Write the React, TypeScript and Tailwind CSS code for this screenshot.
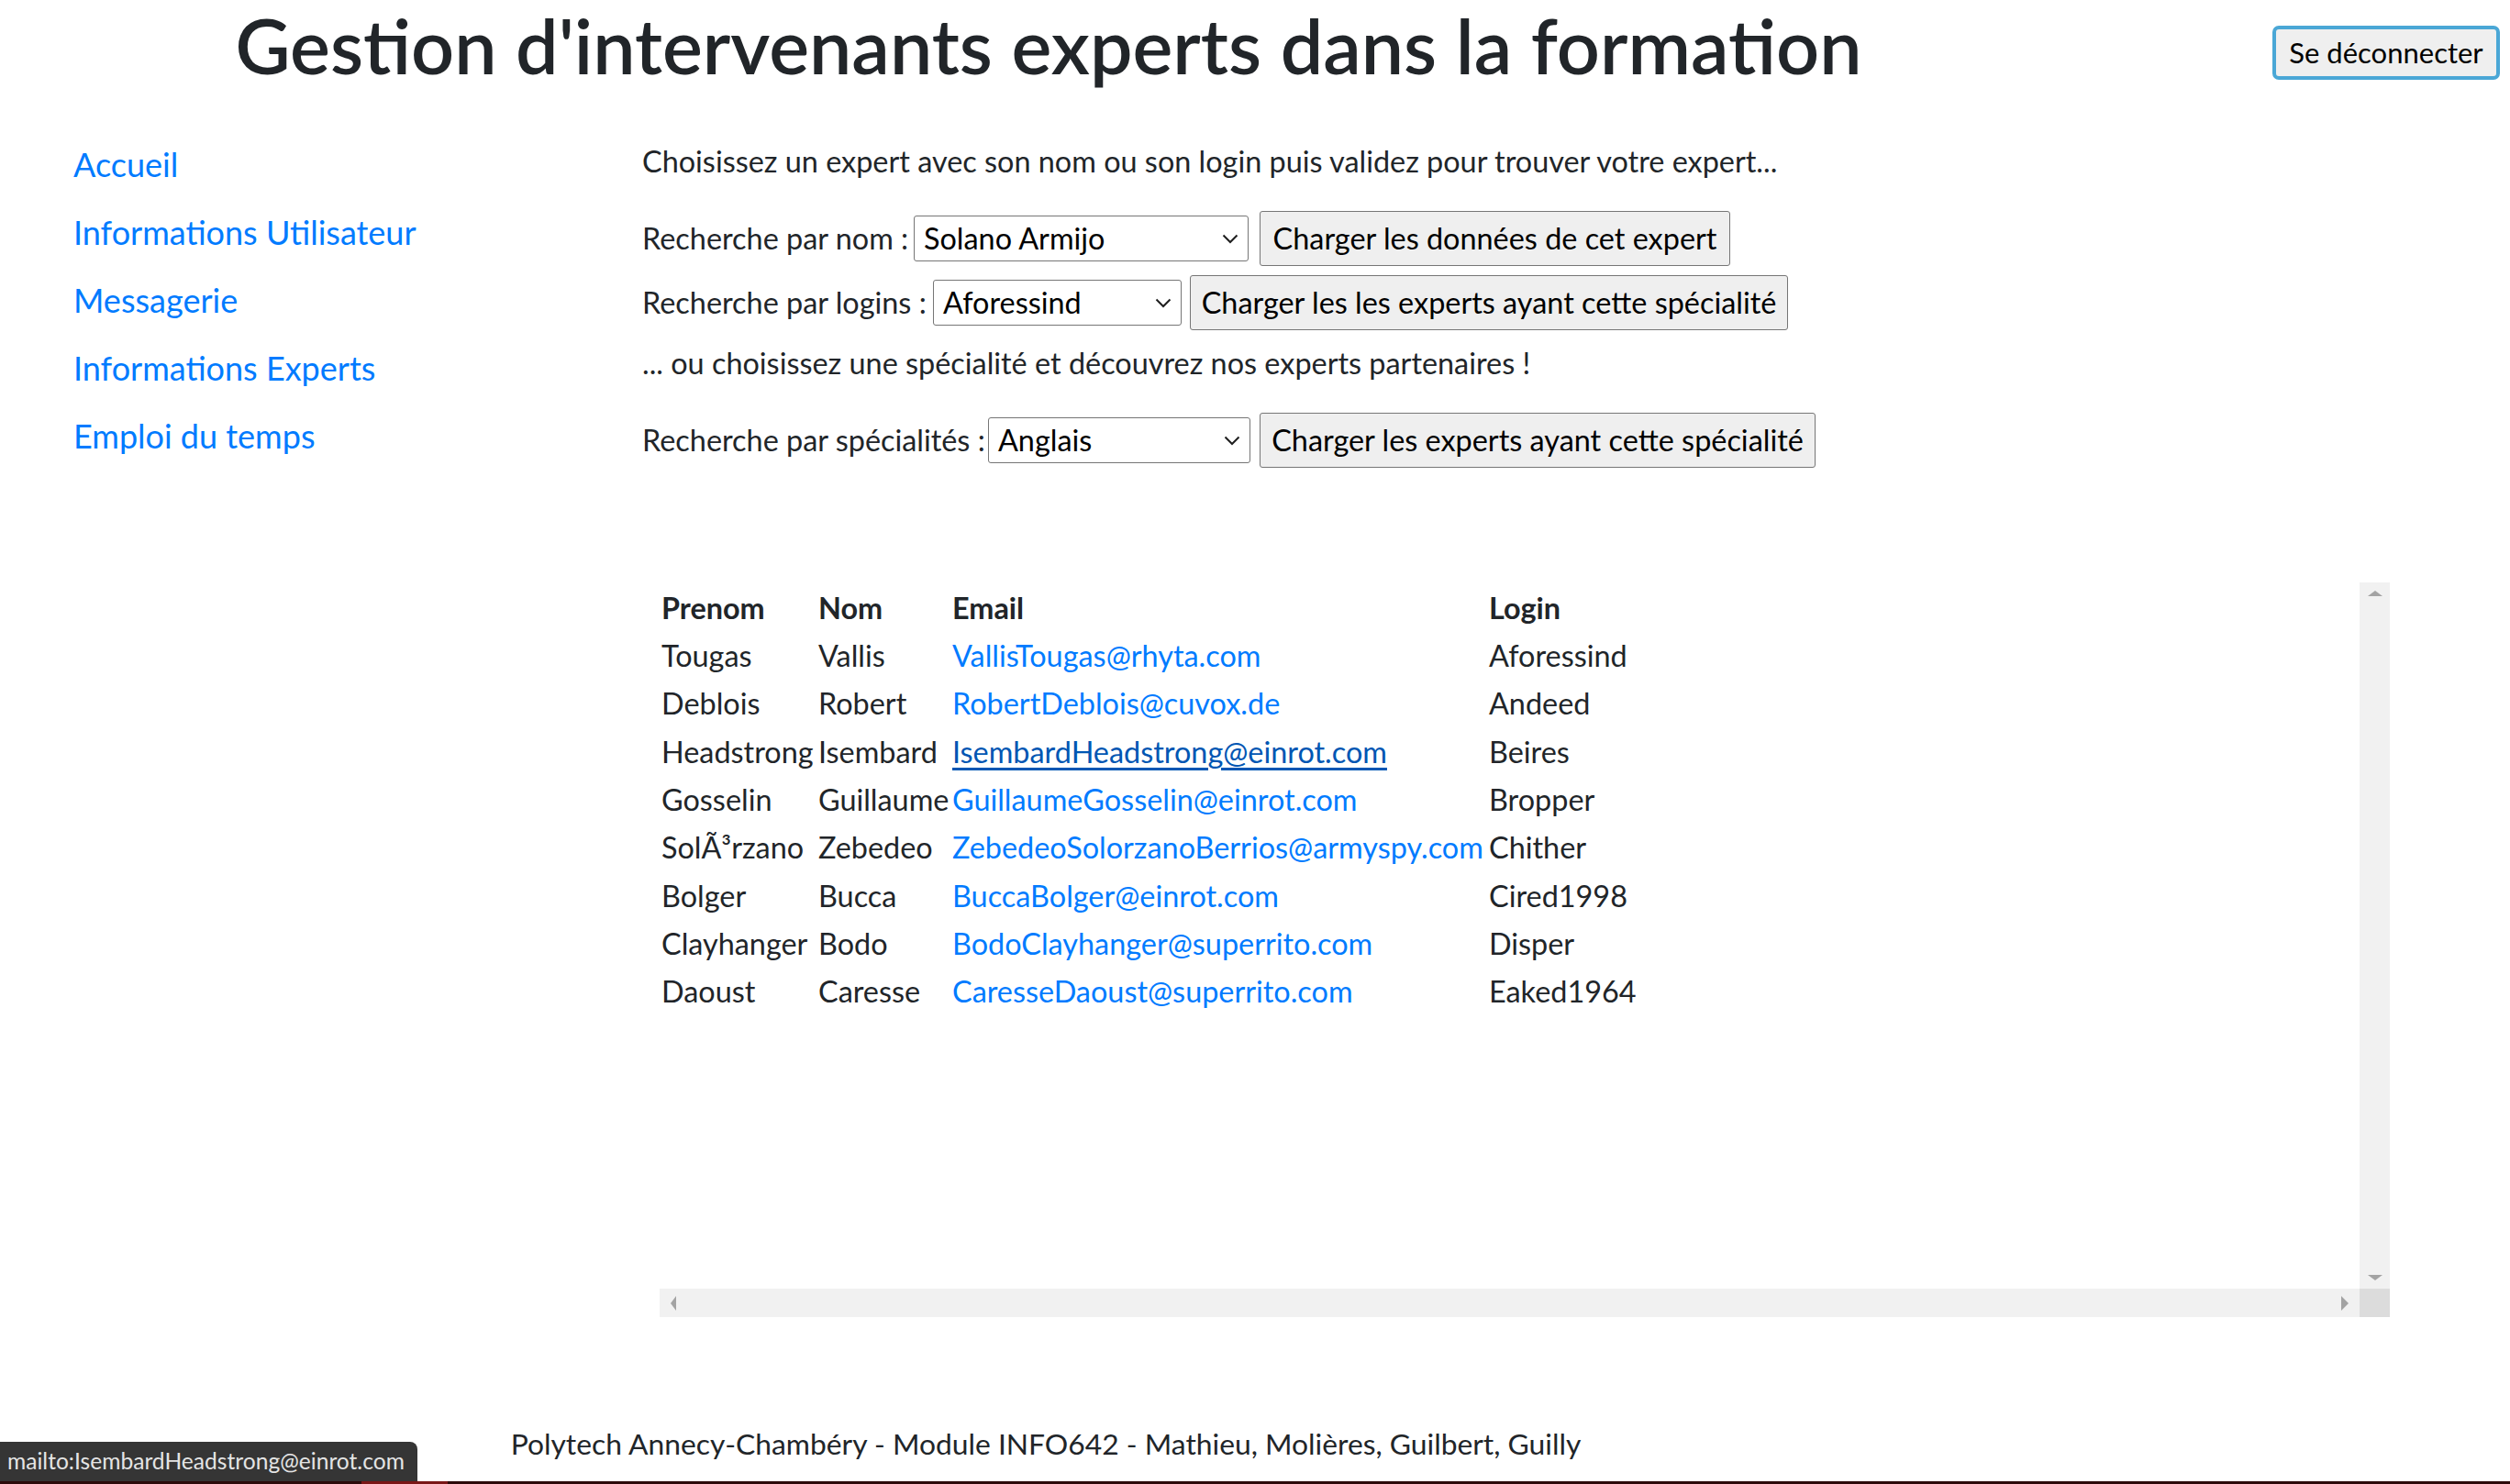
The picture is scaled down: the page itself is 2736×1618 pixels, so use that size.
import React from "react";

const rows: [string, string, string, string][] = [
  ["Tougas", "Vallis", "VallisTougas@rhyta.com", "Aforessind"],
  ["Deblois", "Robert", "RobertDeblois@cuvox.de", "Andeed"],
  ["Headstrong", "Isembard", "IsembardHeadstrong@einrot.com", "Beires"],
  ["Gosselin", "Guillaume", "GuillaumeGosselin@einrot.com", "Bropper"],
  ["SolÃ³rzano", "Zebedeo", "ZebedeoSolorzanoBerrios@armyspy.com", "Chither"],
  ["Bolger", "Bucca", "BuccaBolger@einrot.com", "Cired1998"],
  ["Clayhanger", "Bodo", "BodoClayhanger@superrito.com", "Disper"],
  ["Daoust", "Caresse", "CaresseDaoust@superrito.com", "Eaked1964"],
];

function Chevron() {
  return (
    <svg width="18" height="11" viewBox="0 0 18 11" className="shrink-0">
      <path d="M1.5 1.5 L9 9 L16.5 1.5" fill="none" stroke="#1f1f1f" strokeWidth="2" />
    </svg>
  );
}

function Select({ value, w }: { value: string; w: string }) {
  return (
    <div className={`flex h-[50px] ${w} shrink-0 items-center justify-between rounded-[3px] border border-[#767676] bg-white pl-[10px] pr-[10px] text-black`}>
      <span className="whitespace-nowrap">{value}</span>
      <Chevron />
    </div>
  );
}

function Btn({ label, w }: { label: string; w: string }) {
  return (
    <div className={`flex h-[60px] ${w} shrink-0 items-center justify-center whitespace-nowrap rounded-[3px] border border-[#767676] bg-[#efefef] text-black`}>
      {label}
    </div>
  );
}

export default function App() {
  const links = ["Accueil", "Informations Utilisateur", "Messagerie", "Informations Experts", "Emploi du temps"];
  return (
    <div className="relative h-[1618px] w-[2736px] overflow-hidden bg-white font-['Lato',sans-serif] text-[32.4px] text-[#212529]">
      <header className="flex h-[110px]">
        <h1 className="mt-[4px] w-[2286px] whitespace-nowrap text-center text-[82.6px] font-semibold leading-[1.1]">
          Gestion d'intervenants experts dans la formation
        </h1>
        <div className="flex flex-1 justify-end pr-[11px] pt-[28px]">
          <div className="flex h-[59px] w-[248px] items-center justify-center whitespace-nowrap rounded-[7px] border-[4px] border-[#4aa7d6] bg-[#efefef] text-[31px] text-black">
            Se déconnecter
          </div>
        </div>
      </header>

      <div className="flex">
        <nav className="w-[700px] shrink-0 pl-[80px] pt-[32px]">
          {links.map((l) => (
            <div key={l} className="h-[74px] whitespace-nowrap text-[36px] leading-[74px] text-[#007bff]">
              {l}
            </div>
          ))}
        </nav>

        <main className="flex-1 pt-[44px]">
          <p className="whitespace-nowrap leading-[44px]">
            Choisissez un expert avec son nom ou son login puis validez pour trouver votre expert...
          </p>
          <div className="mt-[32px] flex h-[60px] items-center">
            <span className="w-[296px] shrink-0 whitespace-nowrap">Recherche par nom :</span>
            <Select value="Solano Armijo" w="w-[365px]" />
            <div className="w-[12px] shrink-0" />
            <Btn label="Charger les données de cet expert" w="w-[513px]" />
          </div>
          <div className="mt-[10px] flex h-[60px] items-center">
            <span className="w-[317px] shrink-0 whitespace-nowrap">Recherche par logins :</span>
            <Select value="Aforessind" w="w-[271px]" />
            <div className="w-[9px] shrink-0" />
            <Btn label="Charger les les experts ayant cette spécialité" w="w-[652px]" />
          </div>
          <p className="mt-[14px] whitespace-nowrap leading-[44px]">
            ... ou choisissez une spécialité et découvrez nos experts partenaires !
          </p>
          <div className="mt-[32px] flex h-[60px] items-center">
            <span className="w-[377px] shrink-0 whitespace-nowrap">Recherche par spécialités :</span>
            <Select value="Anglais" w="w-[286px]" />
            <div className="w-[10px] shrink-0" />
            <Btn label="Charger les experts ayant cette spécialité" w="w-[606px]" />
          </div>

          <div className="ml-[19px] mt-[125px] flex h-[801px] w-[1886px] flex-col">
            <div className="flex h-[770px]">
              <div className="flex-1 pl-[2px] pt-[2px]">
                <div className="grid h-[52.3px] grid-cols-[171px_146px_585px_1fr] items-center font-bold">
                  <div>Prenom</div>
                  <div>Nom</div>
                  <div>Email</div>
                  <div>Login</div>
                </div>
                {rows.map((r, i) => (
                  <div key={r[2]} className="grid h-[52.3px] grid-cols-[171px_146px_585px_1fr] items-center whitespace-nowrap">
                    <div>{r[0]}</div>
                    <div>{r[1]}</div>
                    <div className={i === 2 ? "text-[#0056b3] underline decoration-[3px] underline-offset-[5px]" : "text-[#007bff]"}>
                      {r[2]}
                    </div>
                    <div>{r[3]}</div>
                  </div>
                ))}
              </div>
              <div className="flex w-[33px] flex-col items-center justify-between bg-[#f1f1f1] py-[9px]">
                <svg width="16" height="6" viewBox="0 0 16 6">
                  <path d="M8 0 L16 6 L0 6 Z" fill="#a3a3a3" />
                </svg>
                <svg width="16" height="6" viewBox="0 0 16 6">
                  <path d="M0 0 L16 0 L8 6 Z" fill="#a3a3a3" />
                </svg>
              </div>
            </div>
            <div className="flex h-[31px]">
              <div className="flex flex-1 items-center justify-between bg-[#f1f1f1] px-[12px]">
                <svg width="6" height="16" viewBox="0 0 6 16">
                  <path d="M6 0 L6 16 L0 8 Z" fill="#a3a3a3" />
                </svg>
                <svg width="8" height="16" viewBox="0 0 8 16">
                  <path d="M0 0 L8 8 L0 16 Z" fill="#a3a3a3" />
                </svg>
              </div>
              <div className="w-[33px] bg-[#dcdcdc]" />
            </div>
          </div>
        </main>
      </div>

      <footer className="mt-[116px] w-[2280px] whitespace-nowrap text-center text-[31.8px] leading-[44px]">
        Polytech Annecy-Chambéry - Module INFO642 - Mathieu, Molières, Guilbert, Guilly
      </footer>

      <div className="absolute bottom-0 left-0 flex h-[3px] w-full bg-[#2c0b0b]">
        <div className="ml-[394px] h-full w-[94px] bg-[#7a1717]" />
      </div>
      <div className="absolute bottom-[3px] left-0 flex h-[43px] w-[455px] items-center whitespace-nowrap rounded-tr-[8px] bg-[#353535] pl-[8px] text-[24.6px] text-[#e4e4e4]">
        mailto:IsembardHeadstrong@einrot.com
      </div>
    </div>
  );
}
